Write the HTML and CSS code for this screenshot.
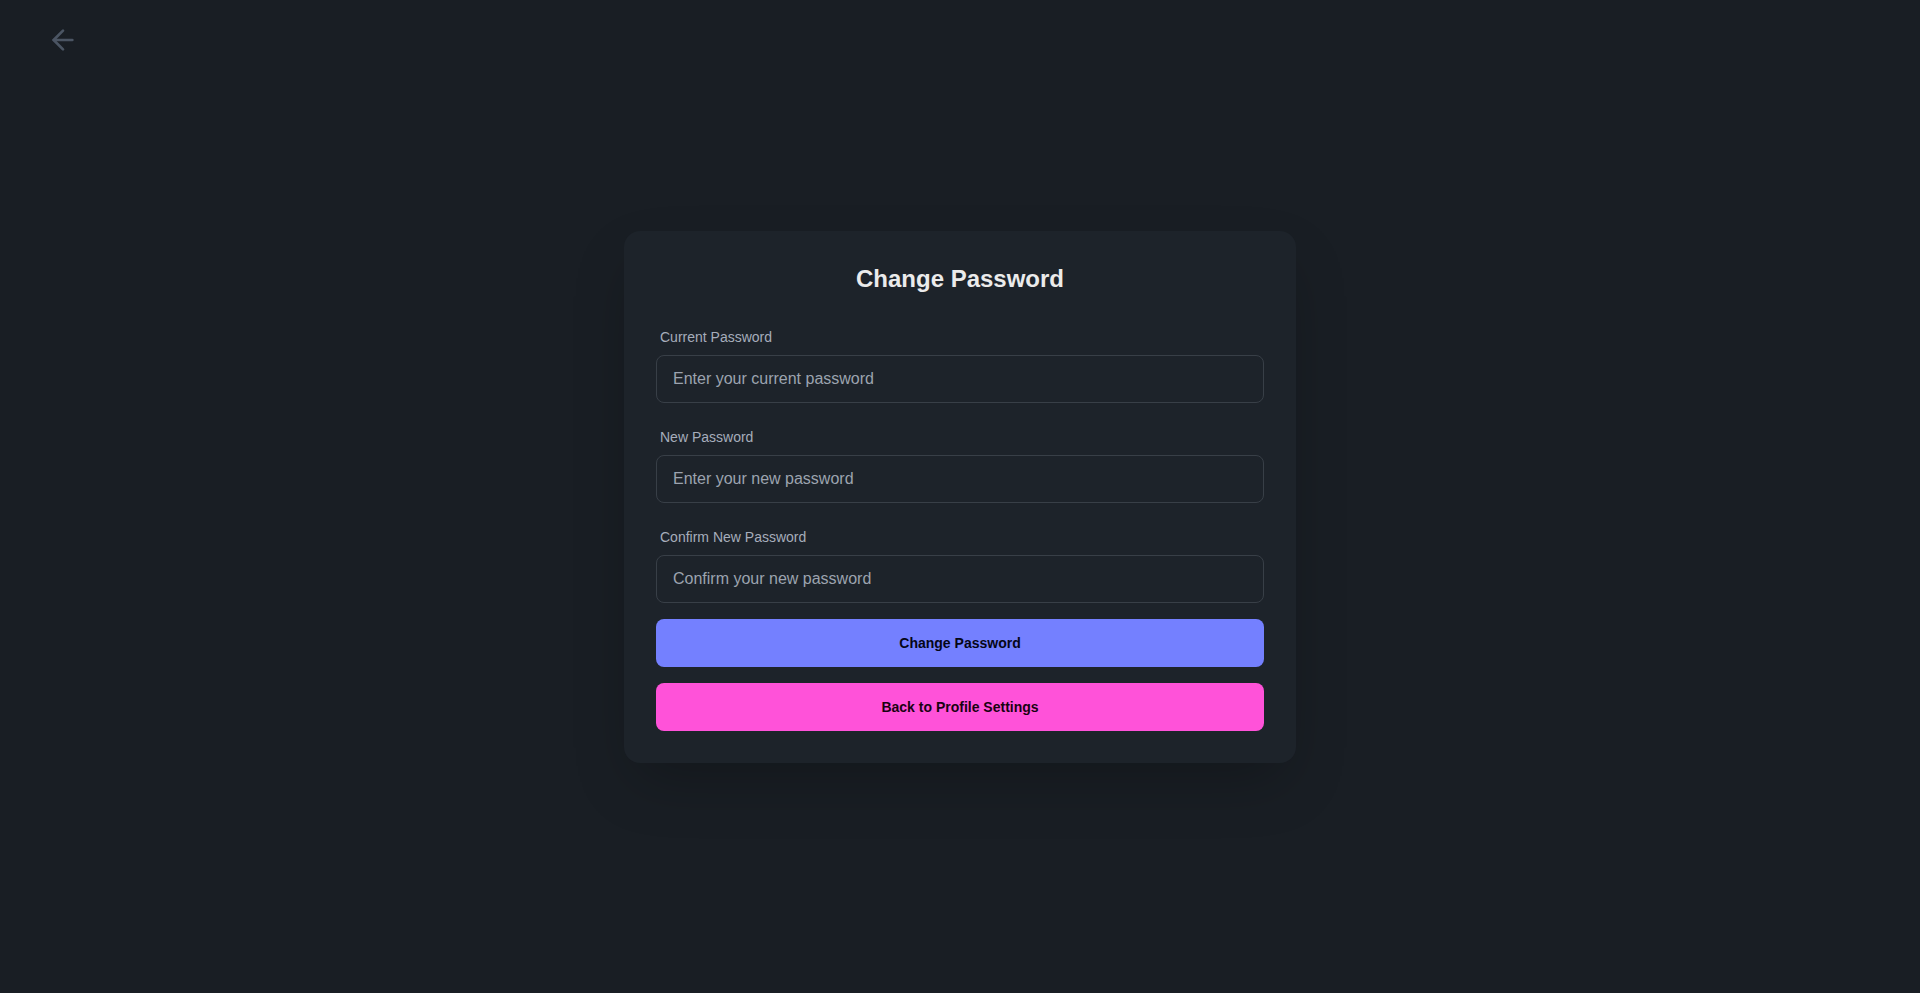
FILE: index.html
```html
<!DOCTYPE html>
<html lang="en">
<head>
<meta charset="utf-8">
<meta name="viewport" content="width=device-width, initial-scale=1">
<title>Change Password</title>
<link rel="stylesheet" href="styles.css">
</head>
<body>
<main class="page">
  <button class="back" type="button" aria-label="Go back">
    <svg class="back-icon" viewBox="0 0 24 24" fill="none" stroke="currentColor" stroke-width="2" stroke-linecap="round" stroke-linejoin="round" aria-hidden="true"><path d="m12 19-7-7 7-7"/><path d="M19 12H5"/></svg>
  </button>
  <section class="card">
    <h1 class="title">Change Password</h1>
    <form class="form">
      <div class="field">
        <label class="label" for="current">Current Password</label>
        <input class="input" id="current" type="password" placeholder="Enter your current password">
      </div>
      <div class="field">
        <label class="label" for="new">New Password</label>
        <input class="input" id="new" type="password" placeholder="Enter your new password">
      </div>
      <div class="field">
        <label class="label" for="confirm">Confirm New Password</label>
        <input class="input" id="confirm" type="password" placeholder="Confirm your new password">
      </div>
      <div class="actions">
        <button class="btn btn-primary" type="submit">Change Password</button>
        <button class="btn btn-secondary" type="button">Back to Profile Settings</button>
      </div>
    </form>
  </section>
</main>
</body>
</html>
```
FILE: styles.css
```css
*, *::before, *::after {
  box-sizing: border-box;
}

body {
  margin: 0;
  background: #191e24;
  color: #a6adbb;
  font-family: "Liberation Sans", Arial, sans-serif;
  font-size: 16px;
  line-height: 24px;
}

.page {
  display: flex;
  align-items: center;
  justify-content: center;
  min-height: 100vh;
  padding: 16px;
}

.back {
  position: absolute;
  top: 16px;
  left: 39px;
  padding: 8px;
  border: 0;
  background: none;
  color: #4b5563;
  cursor: pointer;
}

.back-icon {
  display: block;
  width: 32px;
  height: 32px;
}

.card {
  width: 100%;
  max-width: 672px;
  padding: 32px;
  border-radius: 16px;
  background: #1d232a;
  box-shadow: 0 25px 60px -12px rgb(0 0 0 / 25%);
}

.title {
  margin: 0 0 24px;
  color: #ebebeb;
  font-size: 24px;
  line-height: 32px;
  font-weight: 700;
  text-align: center;
}

.form {
  display: flex;
  flex-direction: column;
  gap: 16px;
}

.field {
  display: flex;
  flex-direction: column;
}

.label {
  padding: 8px 4px;
  font-size: 14px;
  line-height: 20px;
}

.input {
  width: 100%;
  height: 48px;
  padding: 0 16px;
  border: 1px solid #383f47;
  border-radius: 8px;
  background: transparent;
  color: inherit;
  font: inherit;
}

.input::placeholder {
  color: #9ca3af;
  opacity: 1;
}

.actions {
  display: flex;
  flex-direction: column;
  gap: 16px;
}

.btn {
  width: 100%;
  height: 48px;
  border: 0;
  border-radius: 8px;
  font-family: inherit;
  font-size: 14px;
  line-height: 14px;
  font-weight: 600;
  cursor: pointer;
}

.btn-primary {
  background: #7480ff;
  color: #050617;
}

.btn-secondary {
  background: #ff52d9;
  color: #190211;
}
```
